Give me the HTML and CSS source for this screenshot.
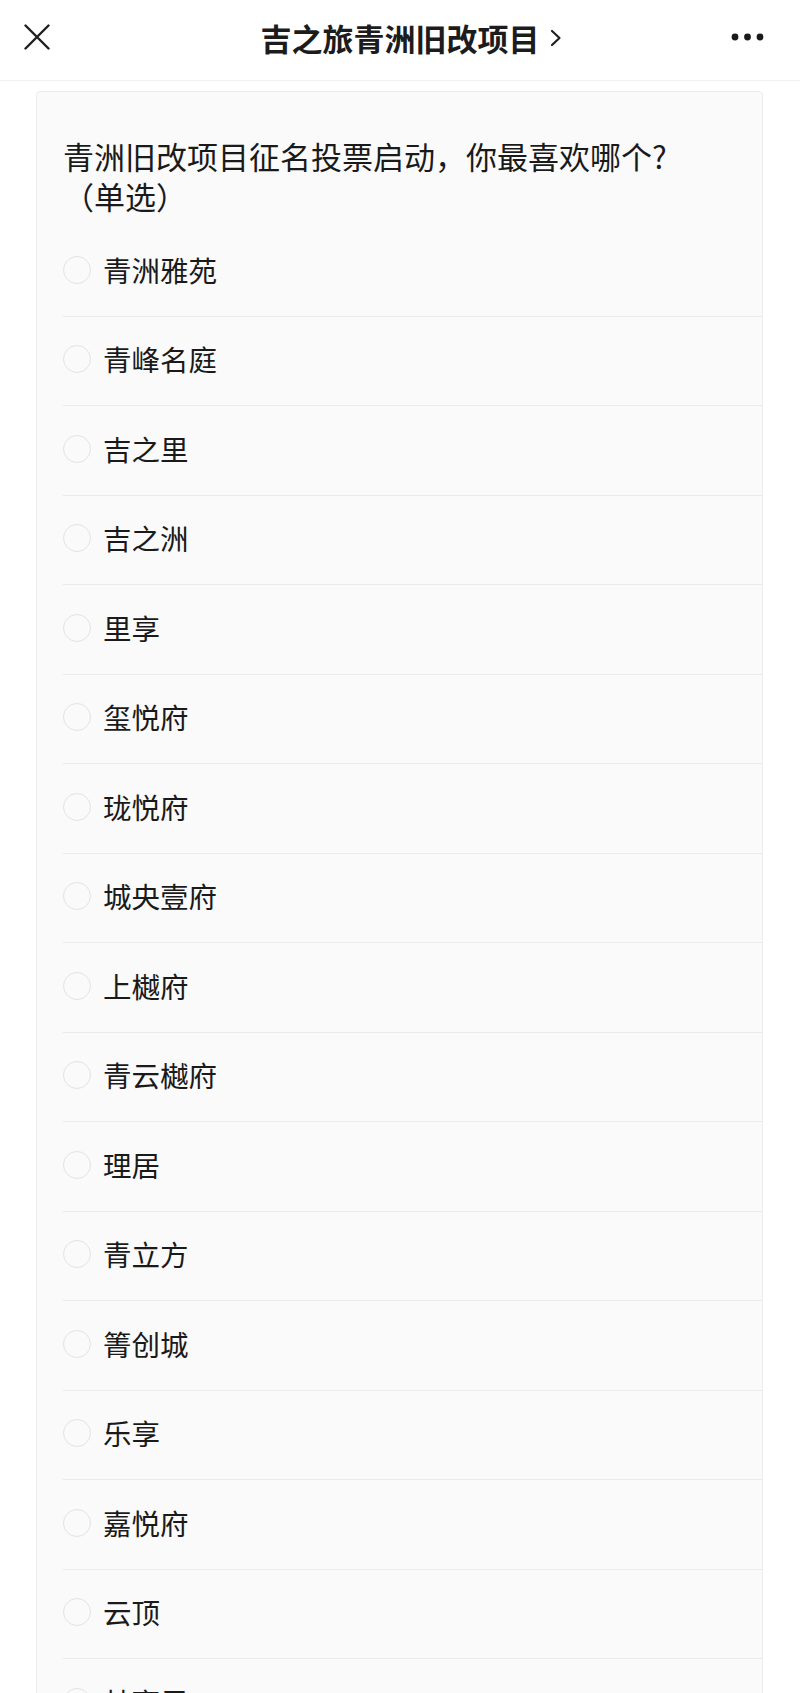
FILE: index.html
```html
<!DOCTYPE html>
<html lang="zh-CN">
<head>
  <meta charset="utf-8">
  <title>吉之旅青洲旧改项目</title>
  <link rel="stylesheet" href="styles.css">
</head>
<body>
  <div class="header">
    <div class="close">
      <svg width="26" height="26" viewBox="0 0 26 26">
        <path d="M1.5 1.5 L24.5 24.5 M24.5 1.5 L1.5 24.5" stroke="#1f1f1f" stroke-width="2.4" stroke-linecap="round" fill="none"/>
      </svg>
    </div>
    <div class="title">吉之旅青洲旧改项目<svg class="chevron" width="12" height="18" viewBox="0 0 12 18">
        <path d="M2 2 L9.5 9 L2 16" stroke="#1f1f1f" stroke-width="2.2" stroke-linecap="round" stroke-linejoin="round" fill="none"/>
      </svg></div>
    <div class="more">
      <svg width="34" height="8" viewBox="0 0 34 8">
        <circle cx="4" cy="4" r="3.4" fill="#1a1a1a"/>
        <circle cx="16.5" cy="4" r="3.4" fill="#1a1a1a"/>
        <circle cx="29" cy="4" r="3.4" fill="#1a1a1a"/>
      </svg>
    </div>
  </div>

  <div class="card">
    <div class="question">青洲旧改项目征名投票启动，你最喜欢哪个?<br>（单选）</div>
    <div class="options">
      <div class="option"><span class="radio"></span><span class="label">青洲雅苑</span></div>
      <div class="option"><span class="radio"></span><span class="label">青峰名庭</span></div>
      <div class="option"><span class="radio"></span><span class="label">吉之里</span></div>
      <div class="option"><span class="radio"></span><span class="label">吉之洲</span></div>
      <div class="option"><span class="radio"></span><span class="label">里享</span></div>
      <div class="option"><span class="radio"></span><span class="label">玺悦府</span></div>
      <div class="option"><span class="radio"></span><span class="label">珑悦府</span></div>
      <div class="option"><span class="radio"></span><span class="label">城央壹府</span></div>
      <div class="option"><span class="radio"></span><span class="label">上樾府</span></div>
      <div class="option"><span class="radio"></span><span class="label">青云樾府</span></div>
      <div class="option"><span class="radio"></span><span class="label">理居</span></div>
      <div class="option"><span class="radio"></span><span class="label">青立方</span></div>
      <div class="option"><span class="radio"></span><span class="label">箐创城</span></div>
      <div class="option"><span class="radio"></span><span class="label">乐享</span></div>
      <div class="option"><span class="radio"></span><span class="label">嘉悦府</span></div>
      <div class="option"><span class="radio"></span><span class="label">云顶</span></div>
      <div class="option"><span class="radio"></span><span class="label">林亨里</span></div>
    </div>
  </div>
</body>
</html>
```

FILE: styles.css
```css
body {
  margin: 0;
  font-family: "Noto Sans CJK SC", "Noto Sans", sans-serif;
  color: #1a1a1a;
  background-color: #fff;
}

.header {
  height: 74px;
  padding-bottom: 6px;
  border-bottom: 1px solid #f1f1f1;
  display: grid;
  grid-template-columns: 1fr auto 1fr;
  align-items: center;
}

.close {
  padding-left: 24px;
  display: flex;
}

.title {
  position: relative;
  font-size: 31px;
  font-weight: bold;
  line-height: 1;
  color: #1c1c1c;
}

.title .chevron {
  position: absolute;
  left: calc(100% + 10px);
  top: 50%;
  margin-top: -8px;
}

.more {
  justify-self: end;
  padding-right: 35px;
  display: flex;
}

.card {
  margin: 10px 37px 0 36px;
  background-color: #fafafa;
  border: 1px solid #ececec;
  border-radius: 4px;
}

.question {
  padding: 44px 26px 0 26px;
  font-size: 31px;
  line-height: 40px;
  margin-bottom: 11px;
}

.option {
  display: flex;
  align-items: center;
  height: 85.5px;
  padding-bottom: 3px;
  margin-left: 26px;
  border-bottom: 1px solid #ebebeb;
}

.radio {
  width: 28px;
  height: 28px;
  box-sizing: border-box;
  border: 1.5px solid #e3e3e3;
  border-radius: 50%;
  margin-right: 12px;
  flex-shrink: 0;
}

.label {
  font-size: 28.5px;
  line-height: 1;
}
```
